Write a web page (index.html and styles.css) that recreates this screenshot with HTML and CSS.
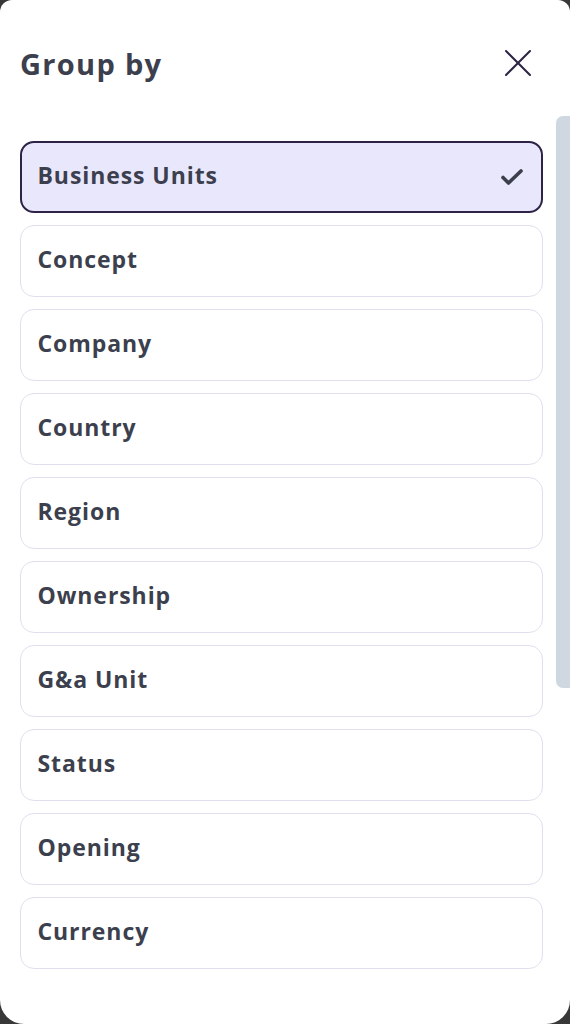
FILE: index.html
```html
<!DOCTYPE html>
<html lang="en">
<head>
<meta charset="utf-8">
<title>Group by</title>
<link rel="stylesheet" href="styles.css">
</head>
<body>
<div class="sheet">
  <header class="sheet-header">
    <h1 class="sheet-title">Group by</h1>
    <button class="close-btn" aria-label="Close">
      <svg width="26" height="26" viewBox="0 0 26 26" fill="none" stroke="#2d2342" stroke-width="2" stroke-linecap="round">
        <path d="M1 1 L25 25 M25 1 L1 25"/>
      </svg>
    </button>
  </header>
  <div class="sheet-body">
    <ul class="option-list">
      <li class="option selected"><span>Business Units</span>
        <svg class="check" width="24" height="18" viewBox="0 0 24 18" fill="none" stroke="#3b3e4b" stroke-width="3.6" stroke-linecap="round" stroke-linejoin="round"><path d="M3 9.5 L8.5 15 L21 3"/></svg>
      </li>
      <li class="option"><span>Concept</span></li>
      <li class="option"><span>Company</span></li>
      <li class="option"><span>Country</span></li>
      <li class="option"><span>Region</span></li>
      <li class="option"><span>Ownership</span></li>
      <li class="option"><span>G&amp;a Unit</span></li>
      <li class="option"><span>Status</span></li>
      <li class="option"><span>Opening</span></li>
      <li class="option"><span>Currency</span></li>
    </ul>
    <div class="scrollbar"><div class="thumb"></div></div>
  </div>
</div>
</body>
</html>
```

FILE: styles.css
```css
* { box-sizing: border-box; }
html, body { margin: 0; padding: 0; }
body {
  background: #383838;
  font-family: "Open Sans", "Liberation Sans", sans-serif;
  color: #3c3f4d;
  height: 1024px;
  overflow: hidden;
}
.sheet {
  background: #ffffff;
  height: 1024px;
  border-radius: 12px 12px 24px 24px;
  display: flex;
  flex-direction: column;
}
.sheet-header {
  height: 116px;
  display: flex;
  align-items: flex-start;
  justify-content: space-between;
  padding: 44px 39px 0 20px;
}
.sheet-title {
  margin: 0;
  font-size: 29px;
  line-height: 40px;
  font-weight: 700;
  letter-spacing: 0.045em;
  color: #3c3f4d;
}
.close-btn {
  background: none;
  border: 0;
  padding: 0;
  margin-top: 6px;
  display: flex;
}
.sheet-body {
  display: flex;
  flex: 1;
  gap: 13px;
}
.option-list {
  list-style: none;
  margin: 0;
  padding: 25px 0 0 20px;
  flex: 1;
  display: flex;
  flex-direction: column;
  gap: 12px;
}
.option {
  height: 72px;
  border: 1.5px solid #e1dfee;
  border-radius: 14px;
  display: flex;
  align-items: center;
  justify-content: space-between;
  padding: 0 17px 4px 16.5px;
  font-size: 23px;
  font-weight: 700;
  letter-spacing: 0.04em;
  color: #3c3f4d;
}
.option.selected {
  background: #e9e7fc;
  border: 2.5px solid #2e2347;
  padding-left: 15.5px;
}
.option.selected .check {
  margin-top: 4px;
}
.scrollbar {
  width: 14px;
}
.thumb {
  height: 572px;
  background: #cfd8e1;
  border-radius: 7px 0 0 7px;
}
```
